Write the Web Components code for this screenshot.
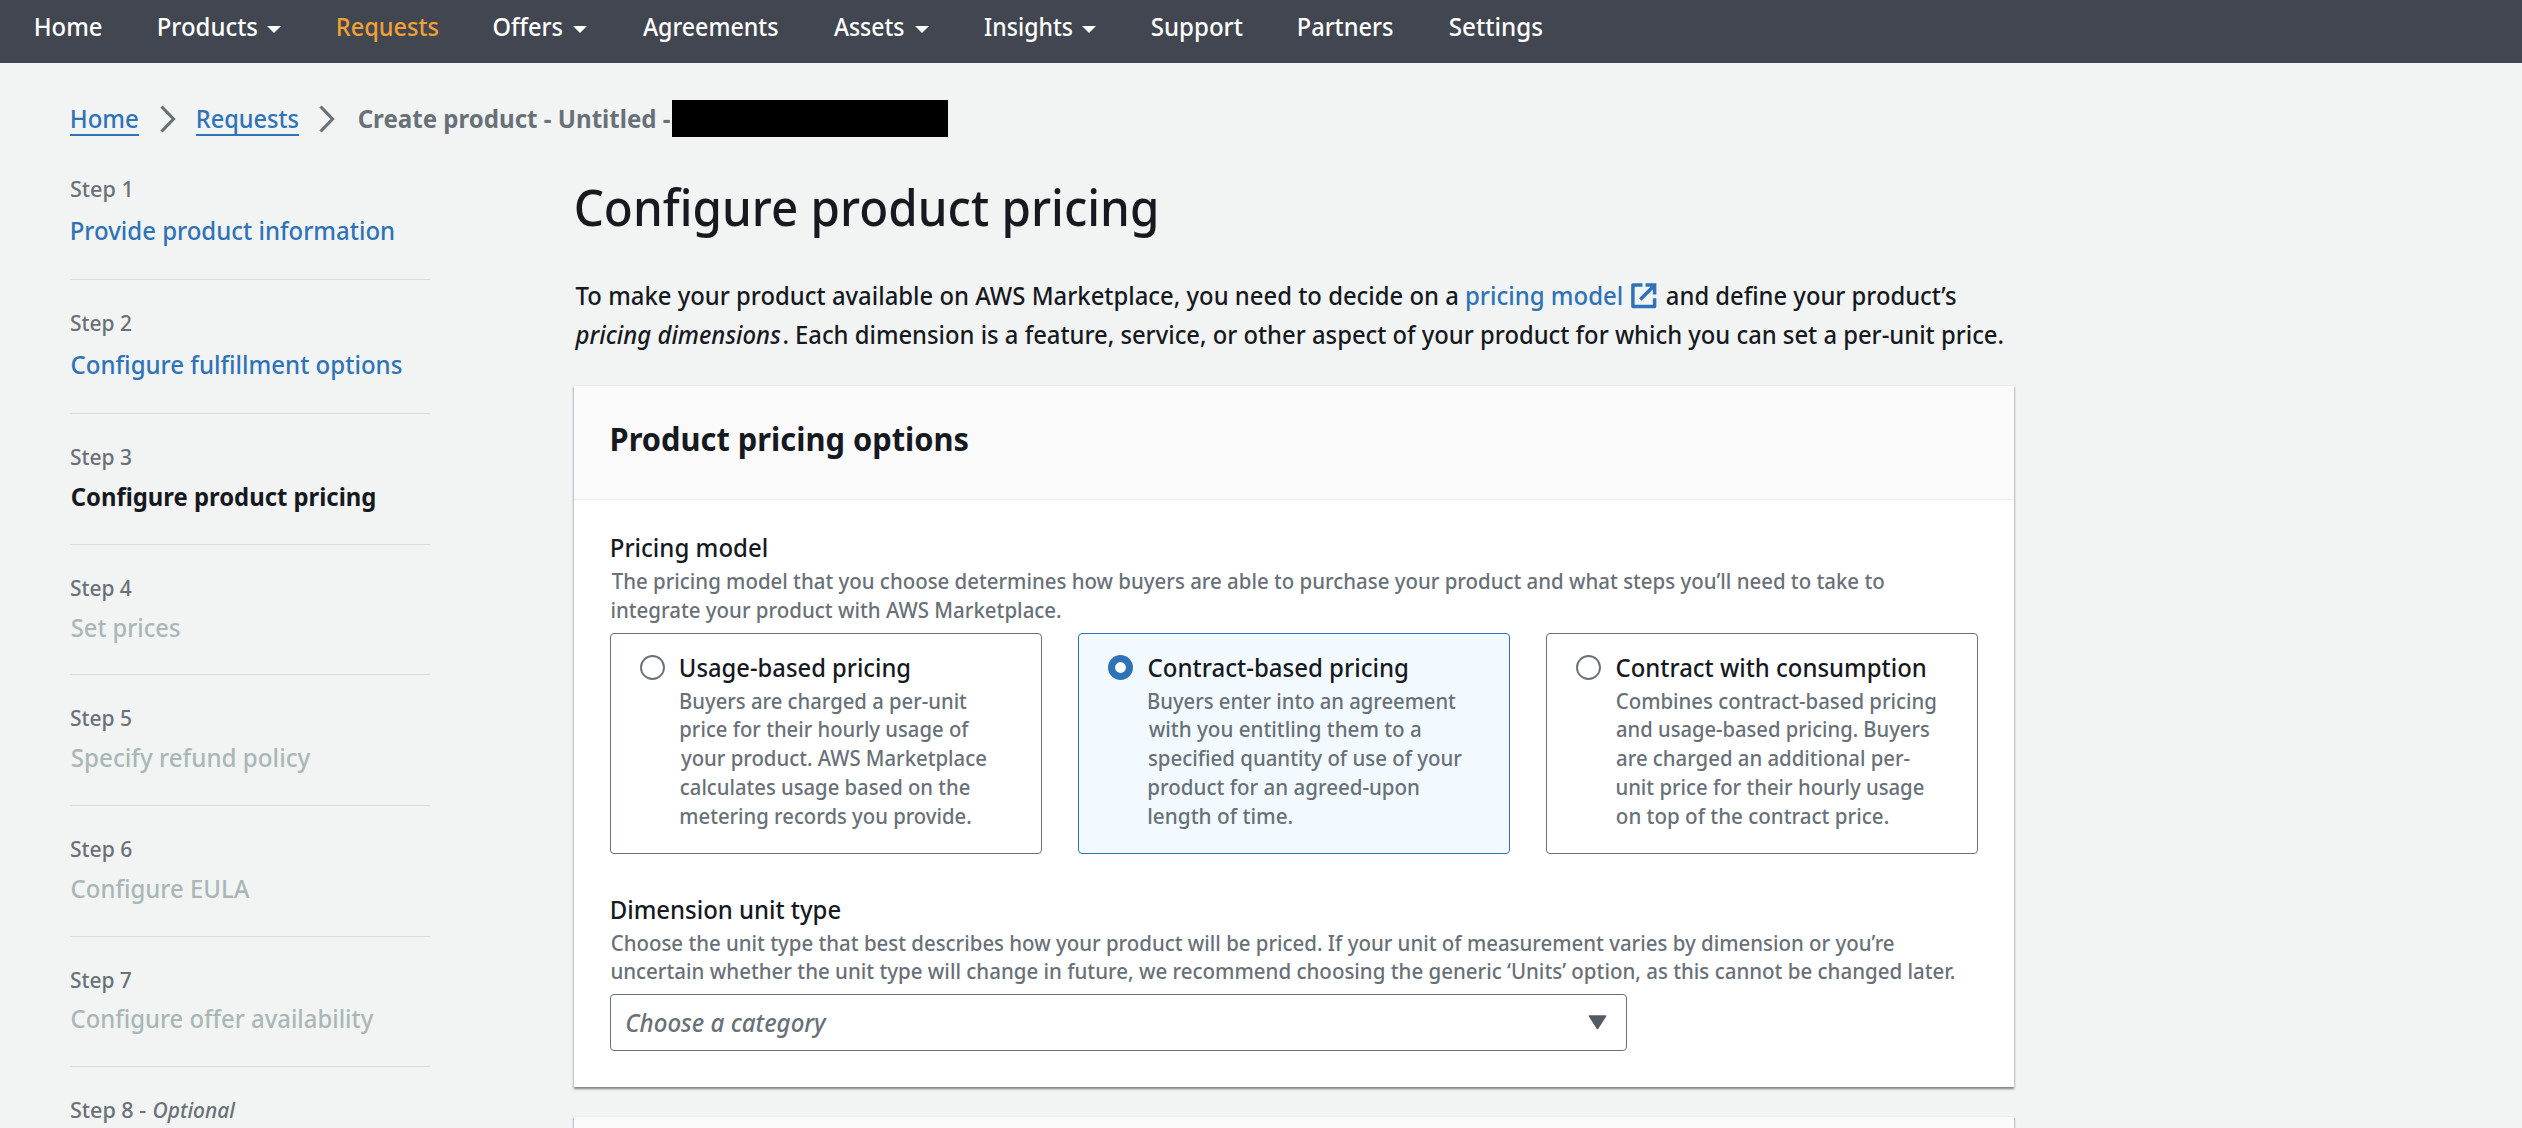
<!DOCTYPE html>
<html lang="en">
<head>
<meta charset="utf-8">
<title>Configure product pricing</title>
<style>
html,body{margin:0;padding:0}
body{background:#f2f4f3;color:#16191f;font:500 25.2px/40px "Noto Sans","Open Sans",sans-serif;height:1128px;overflow:hidden}
</style>
</head>
<body>
<console-page></console-page>
<script>
const make = (host, html) => { host.attachShadow({mode:'open'}).innerHTML = html; };

class ConsolePage extends HTMLElement {
  connectedCallback() {
    make(this, `<style>
      :host{display:block;height:1128px;overflow:hidden}
      .row{display:flex;margin-left:70px}
      .steps{width:360px;flex:none}
      main{width:1440px;margin-left:144px;padding-top:3px}
      h1{margin:0;font-size:50.4px;line-height:60px;font-weight:500}
      h2{margin:0;font-size:32.4px;line-height:40px;font-weight:700}
      .intro{margin:39px 0 31px;line-height:39px}
      .line{display:flex}
      a{color:#2e73b8;text-decoration:none}
      svg{flex:none;margin:7px 0 0 8.5px}
      .label{line-height:40px}
      .hint{color:#687078;font-size:21.6px;line-height:28.8px}
      .tiles{display:flex;gap:36px;margin-top:8px}
      .second{margin-top:35px}
      .cards{display:flex;flex-direction:column;gap:29px}
    </style>
    <top-nav></top-nav>
    <bread-crumbs></bread-crumbs>
    <div class="row">
      <nav class="steps">
        <step-item n="1" nw="60" t="Provide product information" w="323" state="link" gap="7" pad="29"></step-item>
        <step-item n="2" nw="61.5" t="Configure fulfillment options" w="331" state="link" gap="7" pad="29"></step-item>
        <step-item n="3" nw="61.5" t="Configure product pricing" w="304.3" state="current" gap="5" pad="28"></step-item>
        <step-item n="4" nw="62" t="Set prices" w="109" state="off" gap="5" pad="27"></step-item>
        <step-item n="5" nw="61.5" t="Specify refund policy" w="240" state="off" gap="5" pad="28"></step-item>
        <step-item n="6" nw="62" t="Configure EULA" w="179" state="off" gap="5" pad="28"></step-item>
        <step-item n="7" nw="61.5" t="Configure offer availability" w="303" state="off" gap="4" pad="28"></step-item>
        <step-item n="8" nw="76" optional></step-item>
      </nav>
      <main>
        <h1><fit-text l="1" w="581.5">Configure product pricing</fit-text></h1>
        <div class="intro">
          <div class="line"><fit-text l=".5" w="883">To make your product available on AWS Marketplace, you need to decide on a</fit-text><a><fit-text l="8.5" w="156">pricing model</fit-text></a><svg width="26" height="26" viewBox="0 0 26 26" fill="none" stroke="#2e73b8" stroke-width="3.5"><path d="M11.5 1.9H1.9V23.6H23.6V15.3" stroke-linejoin="round"/><path d="M14.5 1.9H23.6V11.5M22.5 3.2L9.3 16.4"/></svg><fit-text l="9.2" w="290.3">and define your product’s</fit-text></div>
          <div class="line"><fit-text l="-.4" w="207" style="font-style:italic">pricing dimensions</fit-text><fit-text l="2" w="1220.5">. Each dimension is a feature, service, or other aspect of your product for which you can set a per-unit price.</fit-text></div>
        </div>
        <div class="cards">
        <content-card>
          <h2 slot="header"><fit-text l="1.4" w="357.6">Product pricing options</fit-text></h2>
          <div class="label"><fit-text l="1" w="156">Pricing model</fit-text></div>
          <div class="hint"><fit-text l=".5" w="1273.5">The pricing model that you choose determines how buyers are able to purchase your product and what steps you’ll need to take to</fit-text><fit-text l=".7" w="450">integrate your product with AWS Marketplace.</fit-text></div>
          <div class="tiles">
            <radio-tile><fit-text slot="title" w="229.8">Usage-based pricing</fit-text><fit-text w="287">Buyers are charged a per-unit</fit-text><fit-text w="290">price for their hourly usage of</fit-text><fit-text w="306.5">your product. AWS Marketplace</fit-text><fit-text w="290">calculates usage based on the</fit-text><fit-text w="291">metering records you provide.</fit-text></radio-tile>
            <radio-tile checked><fit-text slot="title" w="259.6">Contract-based pricing</fit-text><fit-text w="308">Buyers enter into an agreement</fit-text><fit-text w="272.8">with you entitling them to a</fit-text><fit-text w="314.3">specified quantity of use of your</fit-text><fit-text w="271">product for an agreed-upon</fit-text><fit-text w="144.4">length of time.</fit-text></radio-tile>
            <radio-tile><fit-text slot="title" w="309.6">Contract with consumption</fit-text><fit-text w="320">Combines contract-based pricing</fit-text><fit-text w="313.5">and usage-based pricing. Buyers</fit-text><fit-text w="294">are charged an additional per-</fit-text><fit-text w="308">unit price for their hourly usage</fit-text><fit-text w="272.5">on top of the contract price.</fit-text></radio-tile>
          </div>
          <div class="label second"><fit-text l="1" w="229.7">Dimension unit type</fit-text></div>
          <div class="hint"><fit-text l=".5" w="1283.5">Choose the unit type that best describes how your product will be priced. If your unit of measurement varies by dimension or you’re</fit-text><fit-text l=".7" w="1343.8">uncertain whether the unit type will change in future, we recommend choosing the generic ‘Units’ option, as this cannot be changed later.</fit-text></div>
          <select-box><fit-text w="201.6">Choose a category</fit-text></select-box>
        </content-card>
        <content-card></content-card>
        </div>
      </main>
    </div>`);
  }
}

class TopNav extends HTMLElement {
  connectedCallback() {
    const items = [['Home',67,122.5],['Products',99.5,179,9.5],['Requests',101.5,156.5,0,1],['Offers',69.5,149,10.5],['Agreements',136,191],['Assets',71,150.5,11],['Insights',88.5,167.5,10],['Support',92,147],['Partners',95,150.5],['Settings',93.5,120]];
    make(this, `<style>
      :host{display:flex;height:63px;padding-left:35px;background:#424650;color:#fff;line-height:40px}
      .item{display:flex;flex:none;padding-top:6px}
      .on{color:#eea236}
      svg{margin-top:20px;flex:none}
    </style>` + items.map(([t,w,step,caret,on]) =>
      `<div class="item${on?' on':''}" style="width:${step}px"><fit-text w="${w}">${t}</fit-text>${caret?`<svg style="margin-left:${caret}px" width="14" height="7" viewBox="0 0 14 7"><path d="M0 0H14L7 7Z" fill="#fff"/></svg>`:''}</div>`).join(''));
  }
}

class BreadCrumbs extends HTMLElement {
  connectedCallback() {
    const chev = m => `<svg style="margin-left:${m}px" width="16" height="28" viewBox="0 0 16 28" fill="none" stroke="#687078" stroke-width="3.2"><path d="M1.5 1.5L13.5 14L1.5 26.5"/></svg>`;
    make(this, `<style>
      :host{display:flex;height:74px;margin-left:70px;padding-top:37px;line-height:36px}
      a{color:#2e73b8;height:34px;border-bottom:2px solid #2e73b8;flex:none}
      svg{flex:none;margin-top:5px}
      b{color:#687078;margin-left:22.5px;flex:none}
      .mask{background:#000;width:276px;height:37px;margin-left:2px}
    </style>
    <a style="width:69px"><fit-text l=".8" w="67.3">Home</fit-text></a>${chev(20.5)}
    <a style="width:103px;margin-left:20.5px"><fit-text l="1" w="101.5">Requests</fit-text></a>${chev(20)}
    <b><fit-text w="312.5">Create product - Untitled -</fit-text></b><span class="mask"></span>`);
  }
}

class StepItem extends HTMLElement {
  connectedCallback() {
    const a = k => this.getAttribute(k);
    const opt = this.hasAttribute('optional');
    make(this, `<style>
      :host{display:block}
      .n{display:flex;color:#687078;font-size:21.6px;line-height:29px}
      .t{line-height:40px}
      .link{color:#2e73b8}.current{font-weight:700}.off{color:#aab7b8}
      .line{height:1px;background:#d5dbdb;margin-bottom:28px}
    </style>
    <div class="n"><fit-text l=".4" w="${a('nw')}">Step ${a('n')}${opt?' -':''}</fit-text>${opt?'<i><fit-text l="7" w="83">Optional</fit-text></i>':''}</div>
    ${opt?'':`<div class="t ${a('state')}" style="padding:${a('gap')}px 0 ${a('pad')}px"><fit-text l=".6" w="${a('w')}">${a('t')}</fit-text></div><div class="line"></div>`}`);
  }
}

class ContentCard extends HTMLElement {
  connectedCallback() {
    make(this, `<style>
      :host{display:block;border-top:1px solid #eaeded;background:#fff;box-shadow:0 2px 2px rgba(0,28,36,.3),1px 2px 2px rgba(0,28,36,.15),-1px 2px 2px rgba(0,28,36,.15)}
      header{height:81px;padding:32px 36px 0;background:#fafafa;border-bottom:1px solid #eaeded}
      .body{padding:27px 36px 36px}
    </style><header><slot name="header"></slot></header><div class="body"><slot></slot></div>`);
  }
}

class RadioTile extends HTMLElement {
  connectedCallback() {
    const on = this.hasAttribute('checked');
    make(this, `<style>
      :host{display:flex;box-sizing:border-box;width:432px;height:221px;border:1px solid ${on?'#2e73b8':'#687078'};border-radius:4px;padding:13px 0 0 29px;background:${on?'#f2f9ff':'#fff'}}
      svg{flex:none;margin:8px 15px 0 0}
      .title{line-height:40px}
      .text{color:#687078;font-size:21.6px;line-height:28.8px}
    </style>
    <svg width="25" height="25" viewBox="0 0 25 25">${on?'<circle cx="12.5" cy="12.5" r="12.5" fill="#2e73b8"/><circle cx="12.5" cy="12.5" r="5.4" fill="#fff"/>':'<circle cx="12.5" cy="12.5" r="11.5" fill="#fff" stroke="#687078" stroke-width="1.9"/>'}</svg>
    <div><div class="title"><slot name="title"></slot></div><div class="text"><slot></slot></div></div>`);
  }
}

class SelectBox extends HTMLElement {
  connectedCallback() {
    make(this, `<style>
      :host{display:flex;justify-content:space-between;align-items:flex-start;box-sizing:border-box;width:1017px;height:57px;margin-top:8px;border:1px solid #687078;border-radius:4px;padding:7px 19.5px 0 15.4px;color:#687078;font-style:italic;line-height:40px}
      svg{margin-top:13px}
    </style><slot></slot><svg width="19" height="15" viewBox="0 0 19 15"><path d="M1.5 1H17.5L9.5 13.5Z" fill="#545b64" stroke="#545b64" stroke-width="1.6" stroke-linejoin="round"/></svg>`);
  }
}

/* A single line of text condensed or widened to a given visible width. */
class FitText extends HTMLElement {
  connectedCallback() {
    if (this.shadowRoot) return;
    const w = +this.getAttribute('w');
    const cs = getComputedStyle(this);
    const ctx = FitText.ctx ||= document.createElement('canvas').getContext('2d');
    /* measured at ten times the size for sub-pixel precision */
    ctx.font = `${cs.fontStyle} ${cs.fontWeight} ${parseFloat(cs.fontSize)*10}px ${cs.fontFamily}`;
    const m = ctx.measureText(this.textContent.trim());
    /* a small inset leaves room for the antialiased edges */
    const left = m.actualBoundingBoxLeft/10, k = (w - 1.4) / (m.actualBoundingBoxRight/10 + left);
    make(this, `<style>
      :host{display:block;flex:none;width:${w}px;margin-left:${this.getAttribute('l')||0}px;white-space:nowrap}
      span{display:inline-block;vertical-align:top;transform-origin:0 0;transform:translateX(${left*k + .9}px) scaleX(${k})}
    </style><span><slot></slot></span>`);
  }
}

for (const [n, c] of [['console-page',ConsolePage],['top-nav',TopNav],['bread-crumbs',BreadCrumbs],['step-item',StepItem],['content-card',ContentCard],['radio-tile',RadioTile],['select-box',SelectBox],['fit-text',FitText]]) customElements.define(n, c);
</script>
</body>
</html>
